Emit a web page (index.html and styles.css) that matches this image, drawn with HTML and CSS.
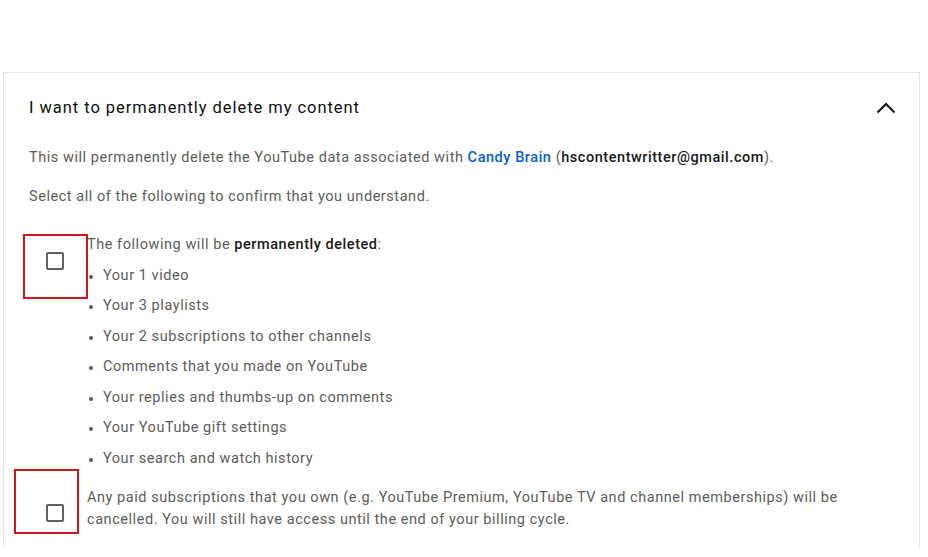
FILE: index.html
```html
<!DOCTYPE html>
<html lang="en">
<head>
<meta charset="utf-8">
<title>Delete content</title>
<link rel="stylesheet" href="styles.css">
</head>
<body>
<div class="page">
  <section class="card">
    <header class="card-head">
      <h2 class="title">I want to permanently delete my content</h2>
      <svg class="chevron" width="20" height="12" viewBox="0 0 20 12" aria-hidden="true">
        <polyline points="1.5,10.5 10,2 18.5,10.5" fill="none" stroke="#0f0f0f" stroke-width="2"/>
      </svg>
    </header>
    <p class="para">This will permanently delete the YouTube data associated with <a class="channel" href="#">Candy Brain</a> (<b>hscontentwritter@gmail.com</b>).</p>
    <p class="para">Select all of the following to confirm that you understand.</p>

    <div class="confirm">
      <div class="check-cell">
        <span class="checkbox"></span>
        <span class="mark mark-one"></span>
      </div>
      <div class="confirm-text">
        <div>The following will be <b>permanently deleted</b>:</div>
        <ul class="list">
          <li>Your 1 video</li>
          <li>Your 3 playlists</li>
          <li>Your 2 subscriptions to other channels</li>
          <li>Comments that you made on YouTube</li>
          <li>Your replies and thumbs-up on comments</li>
          <li>Your YouTube gift settings</li>
          <li>Your search and watch history</li>
        </ul>
      </div>
    </div>

    <div class="confirm confirm-two">
      <div class="check-cell">
        <span class="checkbox"></span>
        <span class="mark mark-two"></span>
      </div>
      <div class="confirm-text paid">Any paid subscriptions that you own (e.g. YouTube Premium, YouTube TV and channel memberships) will be cancelled. You will still have access until the end of your billing cycle.</div>
    </div>
  </section>
</div>
</body>
</html>
```
FILE: styles.css
```css
* { box-sizing: border-box; }
html, body { margin: 0; padding: 0; background: #ffffff; }
body {
  font-family: Roboto, "Liberation Sans", Arial, sans-serif;
  color: #5c5c5c;
  width: 928px;
  height: 557px;
  overflow: hidden;
}
.page {
  padding: 72px 8px 0 3px;
}
.card {
  border: 1px solid #e5e5e5;
  border-bottom: none;
  height: 476px;
  padding: 23px 0 0 25px;
}
.card-head {
  display: flex;
  align-items: center;
  justify-content: space-between;
  height: 24px;
  padding-right: 23px;
}
.title {
  margin: 0;
  font-size: 16.5px;
  font-weight: 400;
  letter-spacing: 0.95px;
  color: #0f0f0f;
  line-height: 24px;
}
.chevron { display: block; }
.para {
  margin: 28px 0 0 0;
  font-size: 14.5px;
  letter-spacing: 0.55px;
  line-height: 20px;
}
.para + .para { margin-top: 19px; }
.channel {
  color: #065fd4;
  font-weight: 500;
  text-decoration: none;
}
b { color: #1a1a1a; font-weight: 500; }
.confirm {
  display: flex;
  margin-top: 28px;
}
.confirm-two { margin-top: 18.5px; }
.check-cell {
  position: relative;
  width: 58px;
  flex: none;
}
.checkbox {
  display: block;
  width: 18px;
  height: 18px;
  margin: 17px 0 0 17px;
  border: 2px solid #606060;
  border-radius: 2px;
}
.mark {
  position: absolute;
  border: 2px solid #d0161b;
}
.mark-one { left: -6px; top: -1px; width: 65px; height: 65px; }
.mark-two { left: -15px; top: -18px; width: 65px; height: 65px; }
.confirm-text {
  font-size: 14.5px;
  letter-spacing: 0.55px;
  line-height: 20px;
  padding-right: 40px;
}
.list {
  margin: 0;
  padding: 0 0 0 16px;
}
.list li {
  margin-top: 10.5px;
  line-height: 20px;
}
.list li::marker { font-size: 12px; }
.paid { line-height: 22px; }
```
